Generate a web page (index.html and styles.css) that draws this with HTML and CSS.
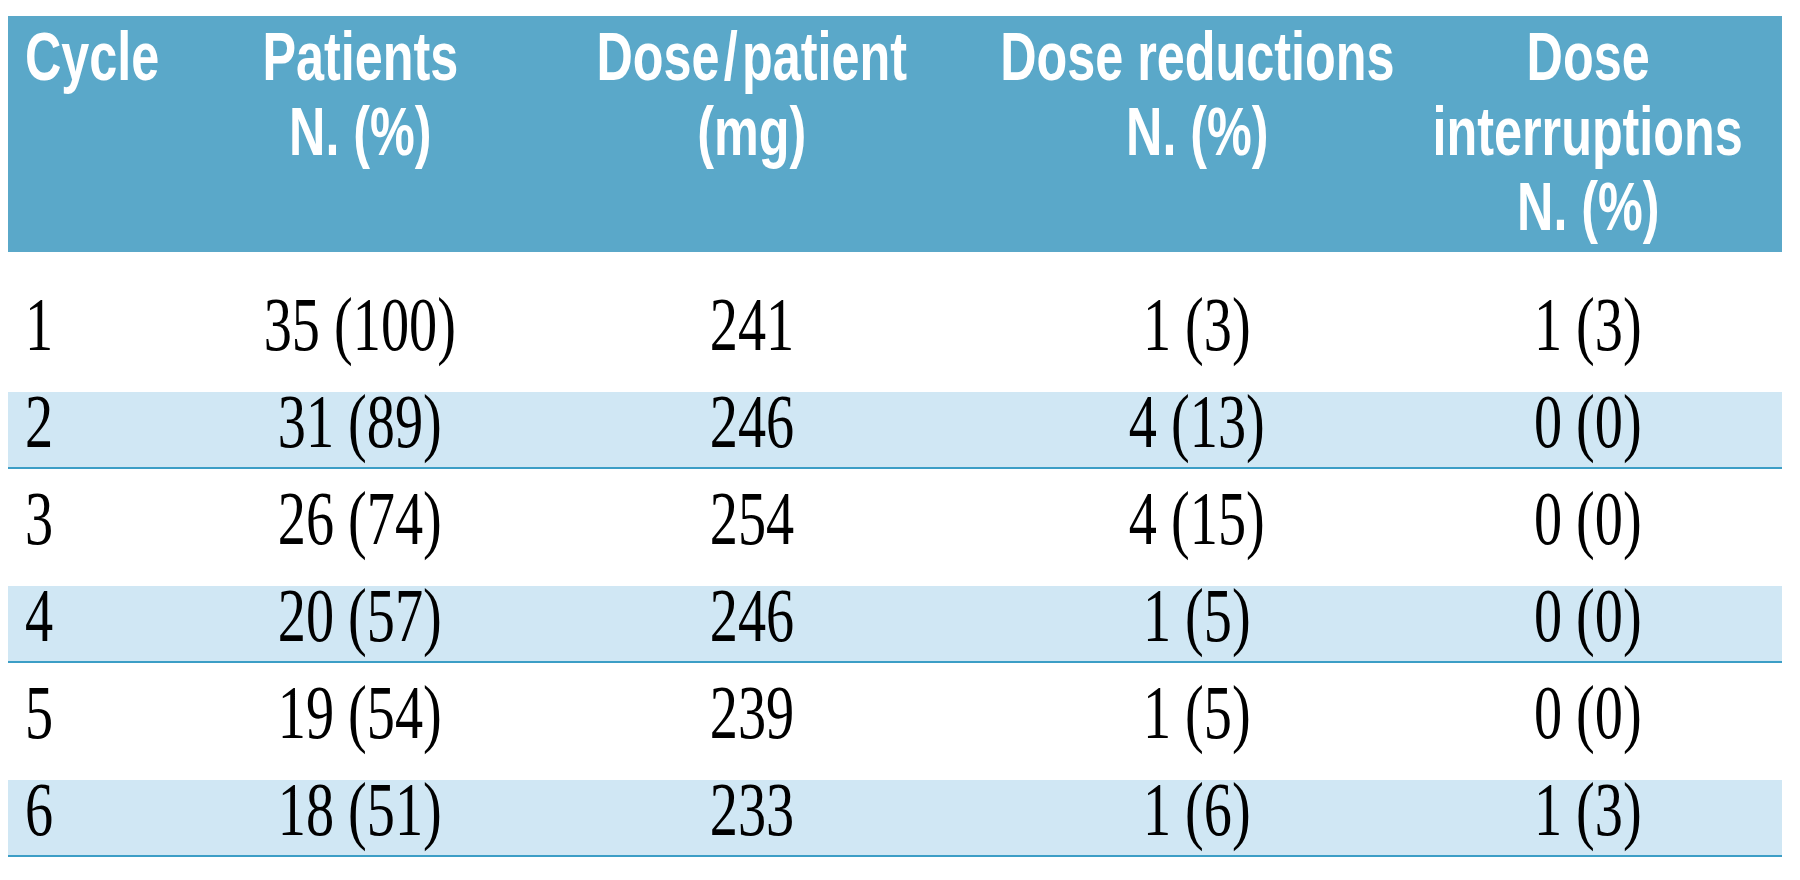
FILE: index.html
```html
<!DOCTYPE html>
<html lang="en">
<head>
<meta charset="utf-8">
<title>Dose table</title>
<link rel="stylesheet" href="styles.css">
</head>
<body>
<div class="table">
  <div class="thead">
    <div class="hc first"><span class="h">Cycle</span></div>
    <div class="hc"><span class="h">Patients</span><span class="h">N. (%)</span></div>
    <div class="hc"><span class="h">Dose&#8202;/&#8202;patient</span><span class="h">(mg)</span></div>
    <div class="hc"><span class="h">Dose reductions</span><span class="h">N. (%)</span></div>
    <div class="hc"><span class="h">Dose</span><span class="h">interruptions</span><span class="h">N. (%)</span></div>
  </div>
  <div class="row">
    <div class="dc first"><span class="d">1</span></div>
    <div class="dc"><span class="d">35 (100)</span></div>
    <div class="dc"><span class="d">241</span></div>
    <div class="dc"><span class="d">1 (3)</span></div>
    <div class="dc"><span class="d">1 (3)</span></div>
  </div>
  <div class="row alt">
    <div class="dc first"><span class="d">2</span></div>
    <div class="dc"><span class="d">31 (89)</span></div>
    <div class="dc"><span class="d">246</span></div>
    <div class="dc"><span class="d">4 (13)</span></div>
    <div class="dc"><span class="d">0 (0)</span></div>
  </div>
  <div class="row">
    <div class="dc first"><span class="d">3</span></div>
    <div class="dc"><span class="d">26 (74)</span></div>
    <div class="dc"><span class="d">254</span></div>
    <div class="dc"><span class="d">4 (15)</span></div>
    <div class="dc"><span class="d">0 (0)</span></div>
  </div>
  <div class="row alt">
    <div class="dc first"><span class="d">4</span></div>
    <div class="dc"><span class="d">20 (57)</span></div>
    <div class="dc"><span class="d">246</span></div>
    <div class="dc"><span class="d">1 (5)</span></div>
    <div class="dc"><span class="d">0 (0)</span></div>
  </div>
  <div class="row">
    <div class="dc first"><span class="d">5</span></div>
    <div class="dc"><span class="d">19 (54)</span></div>
    <div class="dc"><span class="d">239</span></div>
    <div class="dc"><span class="d">1 (5)</span></div>
    <div class="dc"><span class="d">0 (0)</span></div>
  </div>
  <div class="row alt">
    <div class="dc first"><span class="d">6</span></div>
    <div class="dc"><span class="d">18 (51)</span></div>
    <div class="dc"><span class="d">233</span></div>
    <div class="dc"><span class="d">1 (6)</span></div>
    <div class="dc"><span class="d">1 (3)</span></div>
  </div>
</div>
</body>
</html>
```
FILE: styles.css
```css
html, body {
  margin: 0;
  padding: 0;
  background: #ffffff;
}

.table {
  width: 1774px;
  margin: 16px 0 0 8px;
}

.thead,
.row {
  display: grid;
  grid-template-columns: 162px 380px 404px 486px 296px 46px;
}

.thead {
  background: #5aa8c9;
  height: 236px;
  box-sizing: border-box;
  padding-top: 3px;
}

.hc {
  display: flex;
  flex-direction: column;
  align-items: center;
  font-family: "Liberation Sans", Arial, sans-serif;
  font-weight: bold;
  font-size: 68px;
  line-height: 75px;
  color: #ffffff;
  white-space: nowrap;
}

.hc.first {
  align-items: flex-start;
  padding-left: 17px;
}

.h {
  display: inline-block;
  transform: scaleX(0.74);
  transform-origin: center;
}

.hc.first .h {
  transform-origin: left center;
}

.row {
  height: 75px;
  margin-top: 20px;
  border-bottom: 2px solid transparent;
}

.thead + .row {
  margin-top: 43px;
}

.row.alt {
  background: #d0e7f4;
  border-bottom-color: #3c9ec6;
}

.dc {
  display: flex;
  justify-content: center;
  font-family: "Liberation Serif", "Times New Roman", serif;
  font-size: 76px;
  line-height: 58px;
  color: #000000;
  white-space: nowrap;
}

.dc.first {
  justify-content: flex-start;
  padding-left: 17px;
}

.d {
  display: inline-block;
  transform: scaleX(0.74);
  transform-origin: center;
}

.dc.first .d {
  transform-origin: left center;
}
```
